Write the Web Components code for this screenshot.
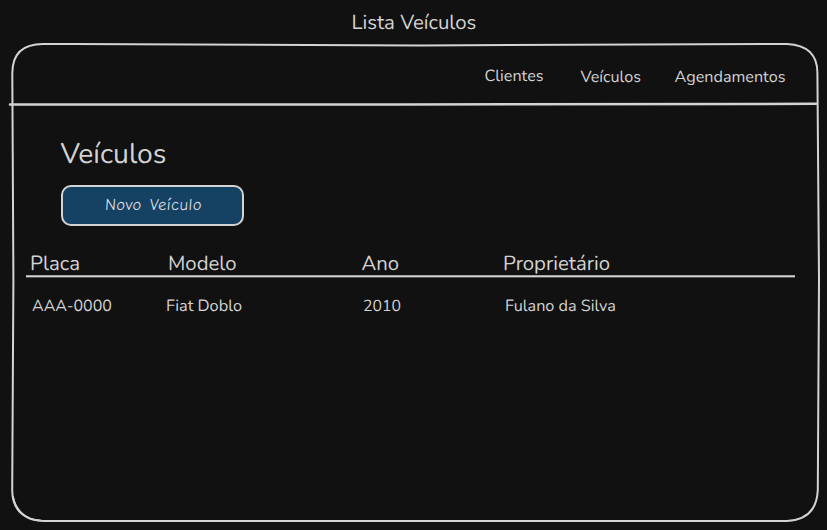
<!DOCTYPE html>
<html lang="pt-BR">
<head>
<meta charset="utf-8">
<title>Lista Veículos</title>
<style>
html,body{margin:0;background:#111}
body{width:827px;height:530px;overflow:hidden;color:#d3d3d3;font-family:Nunito,Lato,"Noto Sans",sans-serif}
</style>
</head>
<body>
<vehicle-screen></vehicle-screen>
<script>
// Text label whose font size is scaled so its line fills the given width.
class FitText extends HTMLElement {
  connectedCallback() {
    const w = +this.getAttribute('w');
    this.attachShadow({mode:'open'}).innerHTML = `<style>
      :host{display:block;white-space:nowrap;width:${w}px;height:24px;font-size:20px;line-height:24px}
      span{display:block;width:max-content;text-rendering:geometricPrecision}
    </style><span><slot></slot></span>`;
    const s = this.shadowRoot.querySelector('span');
    s.style.fontSize = (20 * w / s.getBoundingClientRect().width).toFixed(2) + 'px';
  }
}

class SketchFrame extends HTMLElement {
  constructor() {
    super();
    this.attachShadow({mode:'open'}).innerHTML = `<style>
      :host{display:block;position:relative;height:490px}
      svg{position:absolute;left:0;top:0;pointer-events:none}
    </style>
    <svg width="827" height="490" viewBox="0 40 827 490" fill="none" stroke="#d3d3d3" stroke-width="2" stroke-linecap="round">
      <path d="M43 44C150 44.2 250 45.3 420 45.4C580 45.6 690 44 787 44C807 45 817.5 55 817.4 73C818.2 105 818.8 170 819 280C819 390 817.8 440 817.8 490C817 510 806 520 787 521L43 521C22 520 12.2 508 12.2 490C12.3 430 13.5 370 13.4 280C13.3 190 12.3 120 12.3 73C12.5 54 23 44 43 44Z"/>
      <path d="M13 497C16 512 27 520 40 520.6"/>
      <path d="M10 104.6L400 104.5L816 103.8" stroke-width="2.5"/>
    </svg><slot></slot>`;
  }
}

class TopNav extends HTMLElement {
  constructor() {
    super();
    this.attachShadow({mode:'open'}).innerHTML = `<style>
      :host{display:block;height:65px;box-sizing:border-box;padding:24px 0 0 484.5px}
      nav{display:flex}
      fit-text:nth-child(1){margin-right:37px}
      fit-text:nth-child(2){margin:1px 33.5px 0 0}
      fit-text:nth-child(3){margin-top:1px}
    </style><nav><fit-text w="59">Clientes</fit-text><fit-text w="60.5">Veículos</fit-text><fit-text w="111">Agendamentos</fit-text></nav>`;
  }
}

class SketchButton extends HTMLElement {
  constructor() {
    super();
    this.attachShadow({mode:'open'}).innerHTML = `<style>
      :host{display:block;width:183px;height:41px;color:#d9dee2;font-family:Excalifont,Virgil,"Comic Neue","Comic Sans MS",Nunito,Lato,sans-serif}
      button{all:unset;box-sizing:border-box;width:183px;height:41px;border:2px solid #d3d3d3;border-radius:10px;background:#154163;display:flex;padding:7px 0 0 42px;word-spacing:2px;letter-spacing:.5px}
    </style><button><slot></slot></button>`;
  }
}

class VehicleTable extends HTMLElement {
  constructor() {
    super();
    this.attachShadow({mode:'open'}).innerHTML = `<style>
      :host{display:block;margin:25px 32.5px 0 26px}
      .row{display:grid;grid-template-columns:137.5px 193.5px 142px 1fr}
      .head{height:27px;background:linear-gradient(#a5a5a5 0 1px,#d3d3d3 1px 2px,#545454 2px) 0 100%/100% 3px no-repeat}
      .head>*{margin:1px 0 0 4px}
      .head>:nth-child(2){margin-left:4.5px}
      .head>:nth-child(3){margin:2px 0 0 4.5px}
      .body{padding-top:16px}
      .body>:nth-child(1){margin-left:6px}
      .body>:nth-child(2){margin-left:2.5px}
      .body>:nth-child(3){margin-left:6px}
      .body>:nth-child(4){margin-left:6px}
    </style>
    <div class="row head"><fit-text w="50">Placa</fit-text><fit-text w="68.5">Modelo</fit-text><fit-text w="37.5">Ano</fit-text><fit-text w="107">Proprietário</fit-text></div>
    <div class="row body"><fit-text w="80">AAA-0000</fit-text><fit-text w="76">Fiat Doblo</fit-text><fit-text w="38">2010</fit-text><fit-text w="111">Fulano da Silva</fit-text></div>`;
  }
}

class VehicleScreen extends HTMLElement {
  constructor() {
    super();
    this.attachShadow({mode:'open'}).innerHTML = `<style>
      :host{display:block}
      header{height:29px;padding:11px 0 0 351.5px}
      .title{padding:37px 0 0 60.5px}
      sketch-button{margin:19px 0 0 61.4px}
      .hand{transform:skewX(-4deg)}
    </style>
    <header><fit-text w="125">Lista Veículos</fit-text></header>
    <sketch-frame>
      <top-nav></top-nav>
      <div class="title"><fit-text w="106">Veículos</fit-text></div>
      <sketch-button><fit-text class="hand" w="97">Novo Veículo</fit-text></sketch-button>
      <vehicle-table></vehicle-table>
    </sketch-frame>`;
  }
}
customElements.define('fit-text', FitText);
customElements.define('sketch-frame', SketchFrame);
customElements.define('top-nav', TopNav);
customElements.define('sketch-button', SketchButton);
customElements.define('vehicle-table', VehicleTable);
customElements.define('vehicle-screen', VehicleScreen);
</script>
</body>
</html>
